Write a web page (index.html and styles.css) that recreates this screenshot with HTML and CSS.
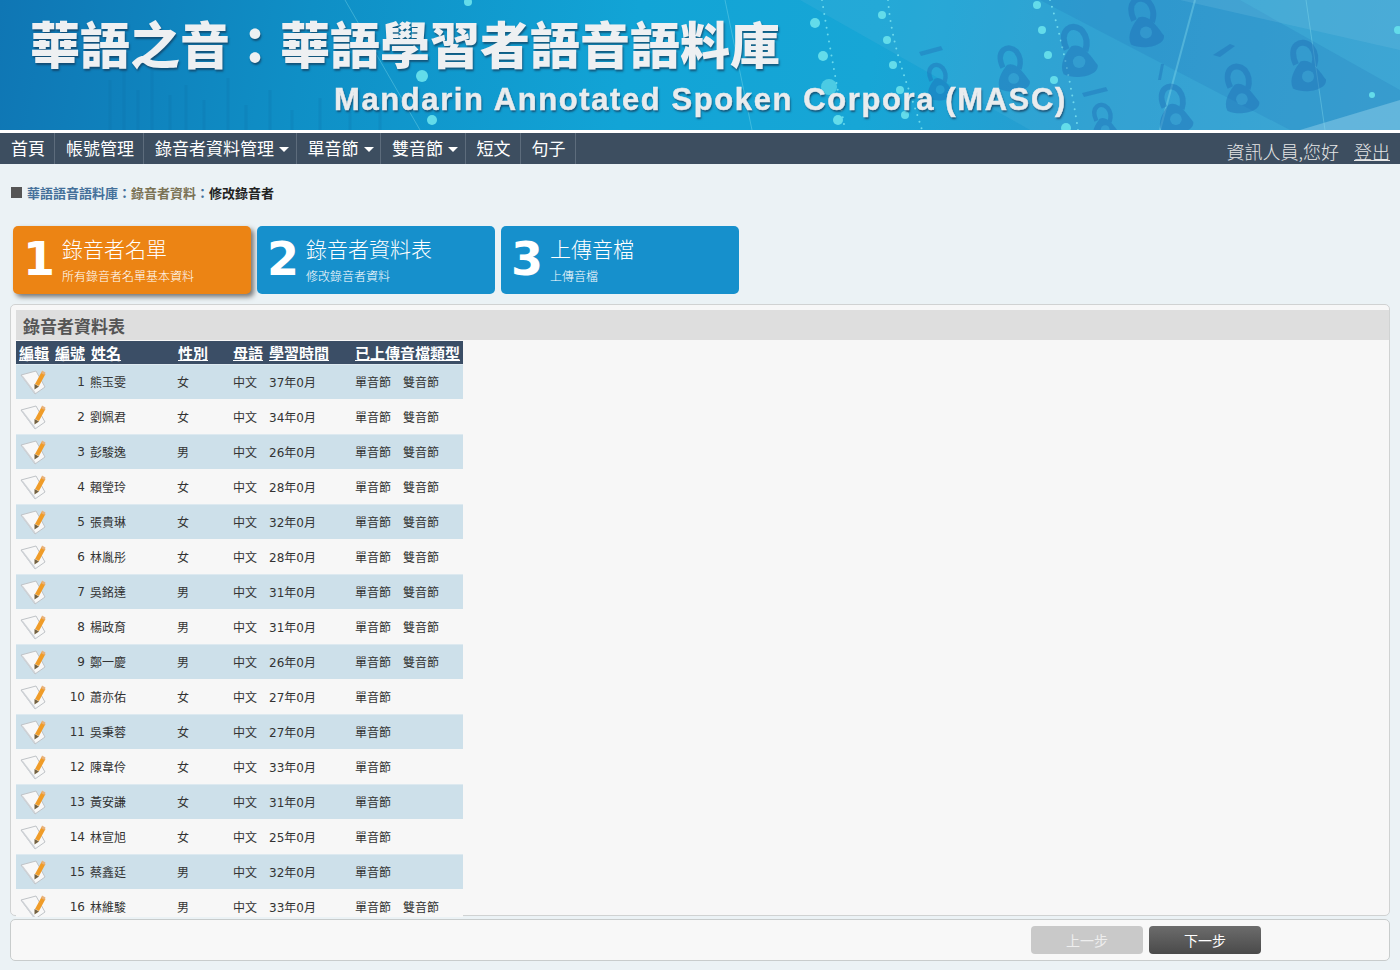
FILE: index.html
```html
<!DOCTYPE html>
<html lang="zh-Hant">
<head>
    <meta charset="UTF-8">
    <meta name="viewport" content="width=device-width, initial-scale=1.0">
    <title>華語之音：華語學習者語音語料庫</title>
    <link rel="stylesheet" href="styles.css">
</head>
<body>
    <svg class="defs" width="0" height="0">
        <symbol id="edit" viewBox="0 0 26 26">
            <polygon points="1,5 16,1 25,17 15,24" fill="#f8f8f8" stroke="#bfc3c7" stroke-width="1"/>
            <path d="M2 6 L15 23" stroke="#cfd2d6" stroke-width="1.500"/>
            <path d="M23.500 3 L17 15" stroke="#f09c28" stroke-width="4.500"/>
            <path d="M22 0.500 L25.500 2.500 L24.500 5 L21 3 Z" fill="#e8b27a"/>
            <path d="M14.500 14 L19 16.500 L14.500 19.500 Z" fill="#73603f"/>
        </symbol>
        <symbol id="lock" viewBox="0 0 60 80" overflow="visible">
            <path d="M18 38 C6 12 26 2 38 14 C46 24 44 34 42 40" fill="none" stroke="currentColor" stroke-width="8"/>
            <path d="M24 34 C38 28 50 48 58 58 C60 72 30 78 14 70 C8 58 16 44 24 34 Z" fill="currentColor"/>
            <circle cx="34" cy="54" r="8" fill="#43a8d8" opacity=".7"/>
        </symbol>
    </svg>

    <header class="banner">
        <svg class="banner-art" viewBox="0 0 1400 130" width="1400" height="130">
            <polygon points="800,0 1400,0 1400,130 1030,130" fill="#4bb4dc" opacity=".25"/>
            <polygon points="1040,0 1240,0 1400,90 1400,130 1290,130" fill="#1a6fb5" opacity=".18"/>
            <polygon points="1300,130 1400,100 1400,130" fill="#8fd0ea" opacity=".5"/>
            <polygon points="1180,0 1400,0 1400,50" fill="#7cc6e4" opacity=".22"/>
            <path d="M110 130V80M124 130V70M138 130V90M152 130V60M170 130V95M186 130V85M204 130V100M228 130V78M246 130V105M270 130V90M292 130V110M320 130V98M350 130V112M380 130V104" stroke="#0d6ea6" stroke-width="3" opacity=".2"/>
            <g fill="none" stroke="#7fe6f2" stroke-linecap="round" stroke-width="2" stroke-dasharray="0 7" opacity=".8">
                <path d="M822 0 C830 50 838 90 845 130"/>
                <path d="M888 0 C892 50 910 90 922 130"/>
                <path d="M1050 0 C1062 40 1072 90 1078 130"/>
            </g>
            <g stroke="#8ee4f0" opacity=".35">
                <path d="M1195 0 L1160 130" stroke-width="2"/>
                <path d="M1306 0 L1325 130" stroke-width="1"/>
                <path d="M725 0 L752 130" stroke-width="1"/>
                <path d="M345 0 L420 130" stroke-width="1"/>
            </g>
            <g color="#1d6db6" opacity=".42">
                <use href="#lock" x="1052" y="20" width="48" height="62"/>
                <use href="#lock" x="1120" y="-8" width="46" height="60"/>
                <use href="#lock" x="1280" y="36" width="50" height="60"/>
                <use href="#lock" x="1215" y="60" width="48" height="58"/>
                <use href="#lock" x="920" y="60" width="36" height="44"/>
                <use href="#lock" x="988" y="42" width="46" height="54"/>
                <use href="#lock" x="1150" y="80" width="46" height="58"/>
                <use href="#lock" x="1084" y="100" width="38" height="44"/>
            </g>
            <g fill="#1d6db6" opacity=".4">
                <polygon points="919,52 941,46 943,50 921,56"/>
                <polygon points="1082,93 1106,87 1108,91 1084,97"/>
                <polygon points="1213,55 1230,44 1235,46 1220,57"/>
                <polygon points="1158,80 1161,64 1164,64 1161,80"/>
            </g>
            <g fill="#63dcea">
                <circle cx="422" cy="76" r="6"/>
                <circle cx="432" cy="120" r="5"/>
                <circle cx="468" cy="2" r="4"/>
                <circle cx="815" cy="23" r="5"/>
                <circle cx="823" cy="56" r="5"/>
                <circle cx="882" cy="15" r="4"/>
                <circle cx="887" cy="40" r="4"/>
                <circle cx="893" cy="65" r="4"/>
                <circle cx="900" cy="90" r="4"/>
                <circle cx="905" cy="115" r="4"/>
                <circle cx="1042" cy="30" r="4"/>
                <circle cx="1048" cy="55" r="4"/>
                <circle cx="1054" cy="80" r="4"/>
                <circle cx="1037" cy="5" r="4"/>
                <circle cx="829" cy="87" r="8" opacity=".7"/>
                <circle cx="838" cy="120" r="5"/>
                <circle cx="1066" cy="128" r="5"/>
                <circle cx="1398" cy="30" r="4"/>
                <circle cx="1372" cy="95" r="3"/>
            </g>
        </svg>
        <div class="banner-title">華語之音：華語學習者語音語料庫</div>
        <div class="banner-sub">Mandarin Annotated Spoken Corpora (MASC)</div>
    </header>

    <nav class="topnav">
        <ul class="menu">
            <li>首頁</li>
            <li>帳號管理</li>
            <li class="has-sub">錄音者資料管理</li>
            <li class="has-sub">單音節</li>
            <li class="has-sub">雙音節</li>
            <li>短文</li>
            <li>句子</li>
        </ul>
        <div class="user">
            <span>資訊人員,您好</span>
            <a href="#">登出</a>
        </div>
    </nav>

    <main class="content">
        <div class="crumbs">
            <span class="crumb-mark"></span>
            <span class="crumb-a">華語語音語料庫：</span><span class="crumb-b">錄音者資料</span><span class="crumb-a">：</span><span class="crumb-c">修改錄音者</span>
        </div>

        <div class="steps">
            <div class="step active">
                <div class="step-num">1</div>
                <div>
                    <div class="step-title">錄音者名單</div>
                    <div class="step-sub">所有錄音者名單基本資料</div>
                </div>
            </div>
            <div class="step">
                <div class="step-num">2</div>
                <div>
                    <div class="step-title">錄音者資料表</div>
                    <div class="step-sub">修改錄音者資料</div>
                </div>
            </div>
            <div class="step">
                <div class="step-num">3</div>
                <div>
                    <div class="step-title">上傳音檔</div>
                    <div class="step-sub">上傳音檔</div>
                </div>
            </div>
        </div>

        <section class="panel">
            <h2 class="panel-title">錄音者資料表</h2>
            <div class="table-wrap">
                <table class="speakers">
                    <thead>
                        <tr>
                            <th class="c-edit"><a href="#">編輯</a></th>
                            <th class="c-id"><a href="#">編號</a></th>
                            <th class="c-name"><a href="#">姓名</a></th>
                            <th class="c-sex"><a href="#">性別</a></th>
                            <th class="c-lang"><a href="#">母語</a></th>
                            <th class="c-time"><a href="#">學習時間</a></th>
                            <th class="c-type"><a href="#">已上傳音檔類型</a></th>
                        </tr>
                    </thead>
                    <tbody id="rows"></tbody>
                </table>
            </div>
        </section>

        <div class="actions">
            <button class="btn btn-off" type="button">上一步</button>
            <button class="btn btn-on" type="button">下一步</button>
        </div>
    </main>

    <script src="script.js"></script>
</body>
</html>
```

FILE: styles.css
```css
html, body {
    margin: 0;
    padding: 0;
    height: 970px;
    overflow: hidden;
}
body {
    background-color: #ebf2f5;
    color: #333;
    font-family: "DejaVu Sans", "Noto Sans CJK TC", sans-serif;
    font-size: 12px;
}
.defs {
    display: block;
    height: 0;
}

/* banner */
.banner {
    position: relative;
    height: 130px;
    overflow: hidden;
    border-bottom: 3px solid #fff;
    background-color: #1190c8;
    background-image: linear-gradient(100deg, #0f76b4 0%, #0f8fc6 22%, #12a4d6 45%, #17a6d6 62%, #2a9ccf 78%, #3aa2d2 100%);
}
.banner-art {
    position: absolute;
    left: 0;
    top: 0;
}
.banner-title {
    position: relative;
    padding: 9px 0 0 30px;
    font-family: "Noto Sans CJK TC", sans-serif;
    font-size: 50px;
    font-weight: 900;
    line-height: 66px;
    white-space: nowrap;
    color: #eef0f2;
    text-shadow: 1px 2px 2px rgba(20, 50, 80, .65);
}
.banner-sub {
    position: relative;
    padding: 6px 0 0 334px;
    font-family: "Liberation Sans", sans-serif;
    font-size: 31px;
    font-weight: bold;
    line-height: 38px;
    letter-spacing: 1.6px;
    white-space: nowrap;
    color: #e9ecee;
    -webkit-text-stroke: .5px #e9ecee;
    text-shadow: 1px 2px 2px rgba(20, 50, 80, .7);
}

/* top nav */
.topnav {
    display: flex;
    justify-content: space-between;
    height: 31px;
    background-color: #3d4e60;
    color: #fff;
    font-family: "Noto Sans CJK TC", sans-serif;
}
.menu {
    display: flex;
    margin: 0;
    padding: 0;
    list-style: none;
}
.menu li {
    padding: 0 9px 0 11px;
    border-right: 1px solid #5d6c7c;
    font-size: 17px;
    line-height: 30px;
}
.menu li.has-sub {
    padding-right: 6.500px;
}
.menu li.has-sub::after {
    content: "";
    display: inline-block;
    margin-left: 5px;
    vertical-align: 3px;
    border-top: 5px solid #fff;
    border-left: 5px solid transparent;
    border-right: 5px solid transparent;
}
.user {
    display: flex;
    gap: 15px;
    padding: 5px 10px 0 0;
    font-size: 18px;
    font-weight: 300;
    line-height: 26px;
    color: #e6e6e6;
}
.user a {
    color: #e6e6e6;
}

.content {
    padding: 0 10px;
}

/* breadcrumb */
.crumbs {
    display: flex;
    align-items: center;
    height: 62px;
    box-sizing: border-box;
    padding: 0 0 6px 1px;
    font-family: "Noto Sans CJK TC", sans-serif;
    font-size: 13px;
    font-weight: bold;
}
.crumb-mark {
    width: 11px;
    height: 11px;
    margin-right: 5px;
    background-color: #555;
}
.crumb-a { color: #44709a; }
.crumb-b { color: #7b7355; }
.crumb-c { color: #222; }

/* wizard steps */
.steps {
    display: flex;
    gap: 6px;
    padding-left: 3px;
}
.step {
    display: flex;
    width: 238px;
    height: 68px;
    box-sizing: border-box;
    padding-left: 10px;
    border-radius: 5px;
    background-color: #1690cc;
    color: #fff;
    font-family: "Noto Sans CJK TC", sans-serif;
}
.step.active {
    background-color: #ec8414;
    box-shadow: 3px 3px 5px #777;
}
.step-num {
    width: 39px;
    font-family: "DejaVu Sans", sans-serif;
    font-size: 46px;
    font-weight: bold;
    line-height: 66px;
}
.step-title {
    margin-top: 6px;
    font-size: 21px;
    line-height: 32px;
    font-weight: 300;
}
.step-sub {
    margin-top: 3px;
    font-size: 12px;
    line-height: 18px;
    font-weight: 300;
}

/* data panel */
.panel {
    height: 612px;
    box-sizing: border-box;
    margin-top: 10px;
    padding: 5px 0 0 5px;
    border: 1px solid #d0d2d2;
    border-radius: 5px;
    background-color: #f7f7f7;
}
.panel-title {
    height: 30px;
    margin: 0 0 1px;
    padding-left: 7px;
    background-color: #dedede;
    color: #555;
    font-family: "Noto Sans CJK TC", sans-serif;
    font-size: 17px;
    font-weight: bold;
    line-height: 32px;
}
.table-wrap {
    height: 576px;
    overflow: hidden;
    position: relative;
    margin-bottom: -1px;
}
.speakers {
    width: 447px;
    border-collapse: collapse;
    table-layout: fixed;
}
.speakers th {
    height: 23px;
    padding: 0 0 0 3px;
    background-color: #3b4e66;
    font-family: "Noto Sans CJK TC", sans-serif;
    font-size: 15px;
    font-weight: bold;
    line-height: 23px;
    text-align: left;
    white-space: nowrap;
}
.speakers th a {
    color: #fff;
}
.speakers td {
    height: 35px;
    padding: 0 0 0 3px;
    white-space: nowrap;
}
.speakers td.t-name,
.speakers td.t-sex {
    padding-left: 2px;
}
.speakers tbody tr:nth-child(odd) td {
    background-image: linear-gradient(#dde9f0 1px, #cde0ea 1px);
}
.speakers tbody tr:nth-child(even) td {
    background-color: #f7f7f7;
}
.c-edit { width: 33px; }
.c-id { width: 33px; }
.c-name { width: 84px; }
.c-sex { width: 52px; }
.c-lang { width: 33px; }
.c-time { width: 83px; }
.c-type { width: 108px; }
.speakers td.t-edit {
    padding: 0 0 0 4px;
}
.speakers td.t-id {
    padding: 0 3px 0 0;
    text-align: right;
}
.t-edit svg {
    display: block;
    margin-top: 3px;
}
.t-second {
    margin-left: 12px;
}

/* bottom buttons */
.actions {
    display: flex;
    justify-content: flex-end;
    align-items: center;
    gap: 6px;
    height: 42px;
    box-sizing: border-box;
    margin-top: 3px;
    padding-right: 128px;
    border: 1px solid #c8cccc;
    border-radius: 5px;
    background-color: #f8f8f8;
}
.btn {
    width: 112px;
    height: 28px;
    padding: 0;
    border: none;
    border-radius: 4px;
    font-family: "Noto Sans CJK TC", sans-serif;
    font-size: 14px;
    cursor: pointer;
}
.btn-off {
    background-color: #c9c9c9;
    color: #eee;
}
.btn-on {
    background-image: linear-gradient(#6c6c6c, #4a4a4a);
    color: #fff;
}
```

FILE: script.js
```js
// 錄音者資料
const speakers = [
    ['熊玉雯', '女', '37', 2],
    ['劉姵君', '女', '34', 2],
    ['彭駿逸', '男', '26', 2],
    ['賴瑩玲', '女', '28', 2],
    ['張貴琳', '女', '32', 2],
    ['林胤彤', '女', '28', 2],
    ['吳銘達', '男', '31', 2],
    ['楊政育', '男', '31', 2],
    ['鄭一慶', '男', '26', 2],
    ['蕭亦佑', '女', '27', 1],
    ['吳秉蓉', '女', '27', 1],
    ['陳韋伶', '女', '33', 1],
    ['黃安謙', '女', '31', 1],
    ['林宣旭', '女', '25', 1],
    ['蔡鑫廷', '男', '32', 1],
    ['林維駿', '男', '33', 2]
];

const rows = document.getElementById('rows');
speakers.forEach(function (s, i) {
    const tr = document.createElement('tr');
    const types = s[3] === 2 ? '單音節<span class="t-second">雙音節</span>' : '單音節';
    tr.innerHTML = `
        <td class="t-edit"><svg width="26" height="26"><use href="#edit"/></svg></td>
        <td class="t-id">${i + 1}</td>
        <td class="t-name">${s[0]}</td>
        <td class="t-sex">${s[1]}</td>
        <td>中文</td>
        <td>${s[2]}年0月</td>
        <td>${types}</td>`;
    rows.appendChild(tr);
});
```
